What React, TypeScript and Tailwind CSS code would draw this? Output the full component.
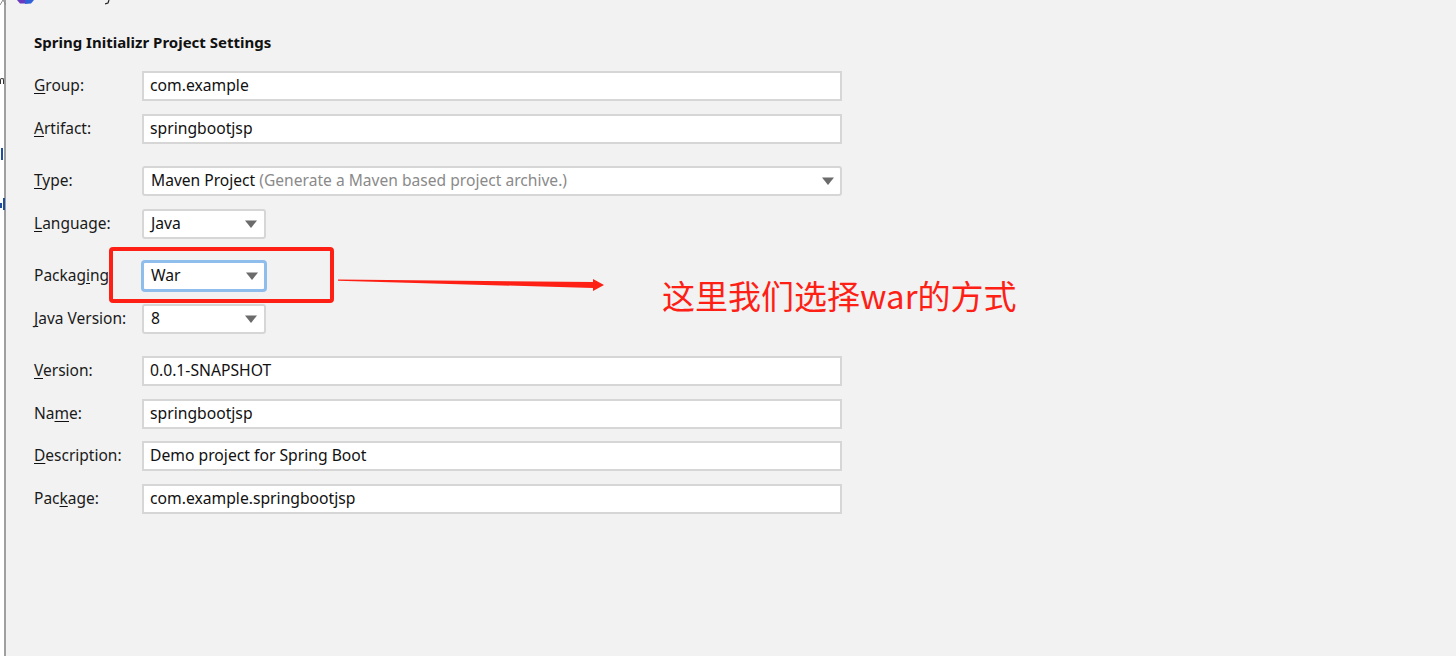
const font = "font-['Noto_Sans','Noto_Sans_CJK_SC',sans-serif]";

const Arrow = () => (
  <svg width="12" height="8" viewBox="0 0 12 8" className="shrink-0">
    <path d="M0 0.5h12L6 8z" fill="#6b6b6b" />
  </svg>
);

const Label = ({ text, mnemonic }: { text: string; mnemonic: number }) => (
  <span className="w-[108px] shrink-0 text-[15.5px] text-[#1a1a1a]">
    {text.slice(0, mnemonic)}
    <span className="underline decoration-[#111] underline-offset-2">{text[mnemonic]}</span>
    {text.slice(mnemonic + 1)}
  </span>
);

const TextRow = ({ label, mnemonic, value, className = "" }: { label: string; mnemonic: number; value: string; className?: string }) => (
  <div className={`flex items-center ${className}`}>
    <Label text={label} mnemonic={mnemonic} />
    <div className="flex h-[30px] w-[700px] items-center border-2 border-[#d6d6d6] bg-white pl-[6px] text-[15.7px] text-[#111]">
      {value}
    </div>
  </div>
);

const SelectRow = ({ label, mnemonic, value, focus = false, className = "" }: { label: string; mnemonic: number; value: string; focus?: boolean; className?: string }) => (
  <div className={`flex items-center ${className}`}>
    <Label text={label} mnemonic={mnemonic} />
    <div
      className={
        focus
          ? "-ml-px flex h-[32px] w-[126px] items-center justify-between rounded-[4px] border-[3px] border-[#8fbdec] bg-white pl-[7px] pr-[6px] text-[15.7px] text-[#111]"
          : "flex h-[30px] w-[124px] items-center justify-between rounded-[3px] border-2 border-[#d6d6d6] bg-white pl-[7px] pr-[7px] text-[15.7px] text-[#111]"
      }
    >
      {value}
      <Arrow />
    </div>
  </div>
);

export default function App() {
  return (
    <div className={`relative flex h-[656px] w-[1456px] overflow-hidden bg-[#f2f2f2] ${font}`}>
      <div className="relative w-[6px] shrink-0 border-r-2 border-[#a0a0a0] bg-white">
        <span className="absolute left-0 top-[78px] h-[6px] w-[4px] rounded-t-[2px] border-x border-t border-[#333]" />
        <span className="absolute left-[1px] top-[148px] h-[12px] w-[2px] bg-[#1f4e9a]" />
        <span className="absolute left-[3px] top-[198px] h-[12px] w-[2px] bg-[#1f4e9a]" />
        <span className="absolute left-0 top-[203px] h-[5px] w-[2px] bg-[#1f4e9a]" />
      </div>

      <div className="flex flex-col pl-[28px] pt-[31px]">
        <h1 className="h-[40px] text-[15px] font-bold text-[#111]">Spring Initializr Project Settings</h1>
        <TextRow label="Group:" mnemonic={0} value="com.example" />
        <TextRow label="Artifact:" mnemonic={0} value="springbootjsp" className="mt-[13px]" />
        <div className="mt-[22px] flex items-center">
          <Label text="Type:" mnemonic={0} />
          <div className="flex h-[30px] w-[700px] items-center justify-between rounded-[3px] border-2 border-[#d6d6d6] bg-white pl-[7px] pr-[6px] text-[15.6px] text-[#111]">
            <span>
              Maven Project <span className="text-[#8a8a8a]">(Generate a Maven based project archive.)</span>
            </span>
            <Arrow />
          </div>
        </div>
        <SelectRow label="Language:" mnemonic={0} value="Java" className="mt-[13px]" />
        <SelectRow label="Packaging" mnemonic={6} value="War" focus className="mt-[21px]" />
        <SelectRow label="Java Version:" mnemonic={0} value="8" className="mt-[12px]" />
        <TextRow label="Version:" mnemonic={0} value="0.0.1-SNAPSHOT" className="mt-[22px]" />
        <TextRow label="Name:" mnemonic={2} value="springbootjsp" className="mt-[13px]" />
        <TextRow label="Description:" mnemonic={0} value="Demo project for Spring Boot" className="mt-[12px]" />
        <TextRow label="Package:" mnemonic={3} value="com.example.springbootjsp" className="mt-[13px]" />
      </div>

      {/* bits of the window behind, cut off at the top edge */}
      <svg width="20" height="5" viewBox="0 0 20 5" className="absolute left-[16px] top-0">
        <path d="M1 0h10l-2 3.5H4z" fill="#6a3bc0" />
        <path d="M9 0h9l-3 3.5-6 .5z" fill="#2f62d8" />
      </svg>
      <svg width="6" height="5" viewBox="0 0 6 5" className="absolute left-0 top-0">
        <path d="M0 5L3 0l3 5" fill="none" stroke="#8a8a8a" />
      </svg>
      <svg width="5" height="5" viewBox="0 0 5 5" className="absolute left-[105px] top-0">
        <path d="M4 0L3 3L0 4" fill="none" stroke="#222" strokeWidth="1.2" />
      </svg>

      {/* annotation drawn over the form */}
      <div className="absolute left-[109px] top-[247px] h-[56px] w-[225px] rounded-[4px] border-[4px] border-[#fe2015]" />
      <svg width="270" height="20" viewBox="0 0 270 20" className="absolute left-[336px] top-[274px]">
        <path d="M2 5.6L257 8L257 5L268 11L257 17L257 14L2 6.8Z" fill="#fe2015" />
      </svg>
      <span className="absolute left-[662px] top-[272px] text-[33px] leading-[46px] text-[#fe2015] font-['Noto_Sans_CJK_SC','Noto_Sans',sans-serif]">
        这里我们选择war的方式
      </span>
    </div>
  );
}
